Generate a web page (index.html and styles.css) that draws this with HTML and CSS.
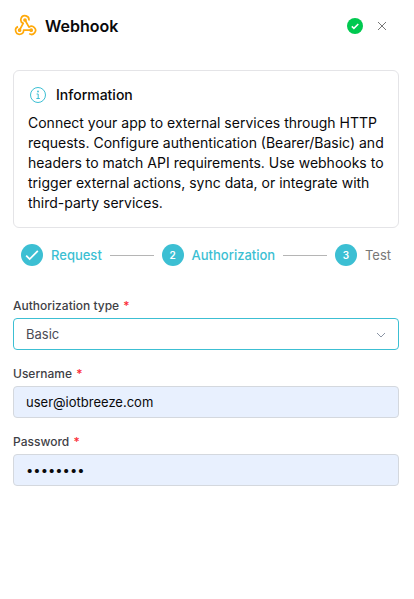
FILE: index.html
```html
<!DOCTYPE html>
<html lang="en">

<head>
    <meta charset="UTF-8">
    <meta name="viewport" content="width=device-width, initial-scale=1.0">
    <title>Webhook</title>
    <link rel="stylesheet" href="styles.css">
</head>

<body>
    <header class="header">
        <svg class="logo" viewBox="0 0 24 24">
            <path d="M15.8 6.5a4 4 0 1 0 -5.6 2.8l-3.6 6.7" />
            <path d="M12 6l4 7.2a4 4 0 1 1 .2 6.4" />
            <path d="M18.2 16.2h-7.6a4 4 0 1 1 -5.6 -3.6" />
            <circle cx="12" cy="6" r="1" />
            <circle cx="6.6" cy="16.2" r="1" />
            <circle cx="18.2" cy="16.2" r="1" />
        </svg>
        <h1>Webhook</h1>
        <svg class="status" viewBox="0 0 16 16">
            <circle cx="8" cy="8" r="8" fill="#00c950" />
            <path d="M4.8 8.4l2.1 2 4.4-4.4" fill="none" stroke="#fff" stroke-width="1.5" />
        </svg>
        <button class="close" type="button" aria-label="Close">
            <svg viewBox="0 0 10 10">
                <path d="M1 1l8 8M9 1l-8 8" />
            </svg>
        </button>
    </header>

    <main>
        <section class="info">
            <div class="info-title">
                <svg viewBox="0 0 20 20">
                    <circle cx="10" cy="10" r="7.5" />
                    <path d="M8.6 9h1.6v4.4M8.4 13.5h3.4" />
                    <circle class="dot" cx="10" cy="6.5" r="0.9" />
                </svg>
                <h2>Information</h2>
            </div>
            <p>Connect your app to external services through HTTP requests. Configure authentication (Bearer/Basic) and headers to match API requirements. Use webhooks to trigger external actions, sync data, or integrate with third-party services.</p>
        </section>

        <ol class="steps">
            <li class="active">
                <span class="num">
                    <svg viewBox="0 0 12 12">
                        <path d="M1 6.5l3 3 7-7" />
                    </svg>
                </span>
                Request
            </li>
            <li class="line"></li>
            <li class="active"><span class="num">2</span>Authorization</li>
            <li class="line"></li>
            <li><span class="num">3</span>Test</li>
        </ol>

        <form>
            <div class="field">
                <label for="type">Authorization type <span>*</span></label>
                <div class="select">
                    <select id="type">
                        <option>Basic</option>
                        <option>Bearer</option>
                    </select>
                    <svg viewBox="0 0 10 6">
                        <path d="M1 1l4 4 4-4" />
                    </svg>
                </div>
            </div>
            <div class="field">
                <label for="username">Username <span>*</span></label>
                <input type="text" id="username" value="user@iotbreeze.com">
            </div>
            <div class="field">
                <label for="password">Password <span>*</span></label>
                <input type="password" id="password" value="password">
            </div>
        </form>
    </main>
</body>

</html>
```
FILE: styles.css
```css
* {
    padding: 0;
    margin: 0;
    box-sizing: border-box;
}

body {
    padding: 13px 15px 13px 13px;
    background: #fff;
    color: #09090b;
    font-family: Inter, "Liberation Sans", sans-serif;
    font-size: 14px;
    line-height: 20px;
}

svg {
    display: block;
    flex: none;
    fill: none;
}

.header {
    display: flex;
    align-items: center;
    height: 26px;
    padding-right: 12px;
}

.header .logo {
    width: 24px;
    height: 24px;
    stroke: #ffa90a;
    stroke-width: 1.7;
    stroke-linejoin: round;
}

.header h1 {
    flex: 1;
    margin-left: 8px;
    font-size: 16px;
    font-weight: 600;
}

.header .status {
    width: 16px;
    height: 16px;
}

.header .close {
    margin-left: 14px;
    border: none;
    background: none;
    cursor: pointer;
}

.close svg {
    width: 10px;
    height: 10px;
    stroke: #777;
}

.info {
    margin-top: 31px;
    padding: 14px;
    border: 1px solid #e4e4e7;
    border-radius: 6px;
}

.info-title {
    display: flex;
    align-items: center;
    gap: 8px;
    margin-bottom: 8px;
}

.info-title svg {
    width: 20px;
    height: 20px;
    stroke: #3cbfd3;
}

.info-title .dot {
    fill: #3cbfd3;
    stroke: none;
}

.info-title h2 {
    font-size: 14px;
    font-weight: 500;
}

/* steps */
.steps {
    display: flex;
    align-items: center;
    gap: 8px;
    height: 22px;
    margin: 16px 8px 0;
    color: #777;
    font-size: 13px;
    list-style: none;
}

.steps li {
    display: flex;
    align-items: center;
    gap: 8px;
}

.steps .active {
    color: #3cbfd3;
    font-weight: 500;
}

.steps .line {
    flex: 1;
    height: 1px;
    background: #b5b5b5;
}

.steps .num {
    display: flex;
    align-items: center;
    justify-content: center;
    width: 22px;
    height: 22px;
    border-radius: 50%;
    background: #3cbfd3;
    color: #fff;
    font-size: 10px;
    font-weight: 600;
}

.num svg {
    width: 14px;
    height: 14px;
    stroke: #fff;
    stroke-width: 1.5;
}

/* form */
form {
    margin-top: 30px;
}

.field {
    margin-bottom: 14px;
}

.field label {
    display: block;
    margin-bottom: 2px;
    color: #3f3f46;
    font-size: 12px;
    font-weight: 500;
    line-height: 20px;
}

.field label span {
    margin-left: 1px;
    color: #fb2c36;
}

.field input,
.field select {
    display: block;
    width: 100%;
    height: 32px;
    padding: 0 12px;
    border: 1px solid #d4d8de;
    border-radius: 4px;
    outline: none;
    background: #e8f0fe;
    color: #09090b;
    font-family: inherit;
    font-size: 13px;
}

.field select {
    appearance: none;
    border-color: #3cbfd3;
    background: #fff;
    color: #4b4b55;
}

.select {
    position: relative;
}

.select svg {
    position: absolute;
    top: 14px;
    right: 13px;
    width: 10px;
    height: 6px;
    stroke: #8b95a5;
    pointer-events: none;
}
```
